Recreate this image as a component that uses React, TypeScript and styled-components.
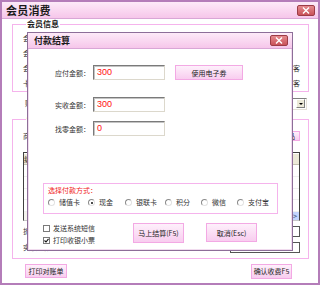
import React, { FC } from "react";
import styled, { createGlobalStyle } from "styled-components";

const GlobalStyle = createGlobalStyle`
  html, body { margin: 0; padding: 0; background: #ffffff; }
  body { font-family: "Noto Sans CJK SC", "Liberation Sans", sans-serif; color: #222; }
`;

const Window = styled.div`
  position: relative;
  box-sizing: border-box;
  width: 320px;
  height: 285px;
  border: 2px solid #b47db9;
  background: #ffffff;
  display: flex;
  flex-direction: column;
`;

const TitleBar = styled.div<{ small?: boolean }>`
  box-sizing: border-box;
  height: ${p => (p.small ? "16px" : "17px")};
  flex: none;
  display: flex;
  align-items: center;
  justify-content: space-between;
  padding: ${p => (p.small ? "0 4px 0 6px" : "0 3px 0 4px")};
  background: linear-gradient(#fdeaf8, #f6c6ea);
  border-bottom: 1px solid #d9a6d6;
`;

const Title = styled.span<{ small?: boolean }>`
  font-size: ${p => (p.small ? "9px" : "11px")};
  font-weight: bold;
  color: #1a1a1a;
  letter-spacing: ${p => (p.small ? "0" : "0.2px")};
`;

const CloseButton = styled.div`
  box-sizing: border-box;
  width: 18px;
  height: 11px;
  border: 1px solid #9c3c46;
  border-radius: 2px;
  background: linear-gradient(#e58a8e, #c9525a);
  display: flex;
  align-items: center;
  justify-content: center;
`;

const Body = styled.div`
  flex: 1;
  display: flex;
  flex-direction: column;
  padding: 0 9px 0 10px;
`;

const Group = styled.fieldset<{ h: number }>`
  box-sizing: border-box;
  margin: 0;
  height: ${p => p.h}px;
  border: 1px solid #f5b3ec;
  padding: 0 8px 0 10px;
  min-width: 0;
`;

const Legend = styled.legend`
  font-size: 8px;
  font-weight: bold;
  line-height: 10px;
  padding: 0 1px;
  margin-left: 3px;
  color: #1a1a1a;
`;

const InfoRows = styled.div`
  display: grid;
  grid-template-columns: 1fr auto;
  row-gap: 6px;
  margin-top: 5px;
`;

const Label = styled.span`
  font-size: 7px;
  line-height: 9px;
  color: #333;
  white-space: nowrap;
`;

const SelectRow = styled.div`
  display: flex;
  align-items: center;
  justify-content: space-between;
  height: 13px;
  margin: 5px 2px 4px 13px;
`;

const SelectBox = styled.div`
  box-sizing: border-box;
  width: 78px;
  height: 12px;
  border: 1px solid;
  border-color: #808080 #e4e0d6 #e4e0d6 #808080;
  display: flex;
  justify-content: flex-end;
  align-items: center;
  padding-right: 1px;
`;

const DropArrow = styled.div`
  box-sizing: border-box;
  width: 9px;
  height: 9px;
  background: #ece9d8;
  border: 1px solid;
  border-color: #ffffff #808080 #808080 #ffffff;
  display: flex;
  align-items: center;
  justify-content: center;
  &::after {
    content: "";
    border-left: 2px solid transparent;
    border-right: 2px solid transparent;
    border-top: 2px solid #000;
  }
`;

const SpreadRow = styled.div`
  display: flex;
  align-items: center;
  justify-content: space-between;
  margin-top: 7px;
`;

const PinkButton = styled.div<{ w: number; h: number }>`
  box-sizing: border-box;
  width: ${p => p.w}px;
  height: ${p => p.h}px;
  border: 1px solid #f3a9e4;
  background: linear-gradient(#fef0fb, #f8cdef);
  font-size: 7px;
  color: #222;
  display: flex;
  align-items: center;
  justify-content: center;
  white-space: nowrap;
`;

const Table = styled.div`
  box-sizing: border-box;
  margin-top: 11px;
  height: 69px;
  border: 1px solid;
  border-color: #404040 #404040 #c8c8c8 #404040;
  display: flex;
  flex-direction: column;
`;

const TableHead = styled.div`
  height: 10px;
  margin-top: 1px;
  background: #ece9d8;
  border-bottom: 1px solid #c5c2b2;
  display: grid;
  grid-template-columns: repeat(6, 1fr);
  font-size: 7px;
  line-height: 10px;
`;

const TableRow = styled.div`
  height: 11px;
  border-bottom: 1px solid #f0f0f0;
`;

const ScrollBar = styled.div`
  margin-top: auto;
  height: 8px;
  background: #f4f3ee;
  display: flex;
  justify-content: flex-end;
`;

const ScrollArrow = styled.div`
  width: 8px;
  height: 8px;
  background: #c3d3fd;
  color: #4d6185;
  font-size: 7px;
  line-height: 8px;
  text-align: center;
  font-weight: bold;
`;

const InputRow = styled.div`
  display: flex;
  align-items: center;
  justify-content: space-between;
  margin-top: 5px;
`;

const SmallInput = styled.div`
  box-sizing: border-box;
  width: 70px;
  height: 11px;
  border: 1px solid #555;
`;

const Footer = styled.div`
  flex: 1;
  display: flex;
  align-items: center;
  justify-content: space-between;
  padding: 0 17px 0 13px;
`;

/* payment dialog */

const Dialog = styled.div`
  position: absolute;
  left: 25px;
  top: 30px;
  box-sizing: border-box;
  width: 266px;
  height: 219px;
  background: #ffffff;
  border: 1px solid #8d6e99;
  box-shadow: inset 0 0 0 1px #f1dcef;
  display: flex;
  flex-direction: column;
`;

const DialogBody = styled.div`
  display: flex;
  flex-direction: column;
  padding: 0 0 0 15px;
`;

const FieldRow = styled.div<{ top: number }>`
  display: flex;
  align-items: center;
  margin-top: ${p => p.top}px;
`;

const FieldLabel = styled.span`
  width: 47px;
  margin-right: 3px;
  text-align: right;
  font-size: 7px;
  color: #333;
  white-space: nowrap;
`;

const MoneyInput = styled.div`
  box-sizing: border-box;
  width: 72px;
  height: 15px;
  border: 1px solid;
  border-color: #7a7a7a #dcd8cc #dcd8cc #7a7a7a;
  box-shadow: inset 1px 1px 0 #c4c4c4;
  padding-left: 3px;
  font-family: "Liberation Sans", Arial, sans-serif;
  font-size: 9px;
  line-height: 13px;
  color: #ff1010;
  margin-right: 10px;
`;

const PayBox = styled.div`
  box-sizing: border-box;
  width: 235px;
  height: 31px;
  margin-top: 47px;
  border: 1px solid #f5b3ec;
  padding: 2px 3px 0 4px;
`;

const PayTitle = styled.div`
  font-size: 7px;
  line-height: 9px;
  color: #f01c1c;
`;

const RadioRow = styled.div`
  display: grid;
  grid-template-columns: 40px 37px 40px 36px 36px auto;
  margin-top: 3px;
`;

const RadioItem = styled.label`
  display: flex;
  align-items: center;
  gap: 4px;
  font-size: 7px;
  line-height: 9px;
  color: #333;
  white-space: nowrap;
`;

const RadioDot = styled.span<{ checked?: boolean }>`
  box-sizing: border-box;
  width: 7px;
  height: 7px;
  border-radius: 50%;
  border: 1px solid;
  border-color: #8a8a8a #e2e2e2 #e2e2e2 #8a8a8a;
  display: flex;
  align-items: center;
  justify-content: center;
  &::after {
    content: "";
    width: 2px;
    height: 2px;
    border-radius: 50%;
    background: ${p => (p.checked ? "#111" : "transparent")};
  }
`;

const BottomArea = styled.div`
  display: flex;
  align-items: flex-start;
  margin-top: 9px;
`;

const CheckColumn = styled.div`
  display: flex;
  flex-direction: column;
  gap: 4px;
  width: 90px;
  margin-top: 1px;
`;

const CheckItem = styled.label`
  display: flex;
  align-items: center;
  gap: 3px;
  font-size: 7px;
  line-height: 8px;
  color: #333;
  white-space: nowrap;
`;

const CheckBox = styled.span`
  box-sizing: border-box;
  width: 7px;
  height: 7px;
  border: 1px solid #7a7a7a;
  background: #fff;
  display: flex;
  align-items: center;
  justify-content: center;
`;

const DialogButtons = styled.div`
  display: flex;
  gap: 22px;
`;

const CloseX: FC = () => (
  <svg width="8" height="7" viewBox="0 0 8 7">
    <path d="M1 0.5 L7 6.5 M7 0.5 L1 6.5" stroke="#fff" strokeWidth="1.4" />
  </svg>
);

const Check: FC<{ on?: boolean }> = ({ on }) => (
  <CheckBox>
    {on && (
      <svg width="5" height="5" viewBox="0 0 5 5">
        <path d="M0.5 2.5 L2 4 L4.5 0.8" stroke="#111" strokeWidth="1.1" fill="none" />
      </svg>
    )}
  </CheckBox>
);

const payMethods = ["储值卡", "现金", "银联卡", "积分", "微信", "支付宝"];

export default function App() {
  return (
    <>
      <GlobalStyle />
      <Window>
        <TitleBar>
          <Title>会员消费</Title>
          <CloseButton><CloseX /></CloseButton>
        </TitleBar>
        <Body>
          <Group h={73}>
            <Legend>会员信息</Legend>
            <InfoRows>
              <Label>会员卡号</Label><Label></Label>
              <Label>会员姓名</Label><Label></Label>
              <Label>会员等级</Label><Label>◎ 生客</Label>
              <Label>卡内余额</Label><Label>◎ 熟客</Label>
            </InfoRows>
          </Group>
          <SelectRow>
            <Label>账户类型</Label>
            <SelectBox><DropArrow /></SelectBox>
          </SelectRow>
          <Group h={145}>
            <Legend>快速收银</Legend>
            <SpreadRow>
              <Label>商品编号</Label>
              <PinkButton w={38} h={10}>查询商品</PinkButton>
            </SpreadRow>
            <Table>
              <TableHead>
                <span>编号</span><span>名称</span><span>单价</span><span>数量</span><span>金额</span><span>备注</span>
              </TableHead>
              <TableRow />
              <TableRow />
              <TableRow />
              <TableRow />
              <ScrollBar><ScrollArrow>&gt;</ScrollArrow></ScrollBar>
            </Table>
            <InputRow>
              <Label>折扣金额</Label>
              <SmallInput />
            </InputRow>
            <InputRow>
              <Label>实收金额</Label>
              <SmallInput />
            </InputRow>
          </Group>
          <Footer>
            <PinkButton w={42} h={14}>打印对账单</PinkButton>
            <PinkButton w={41} h={15}>确认收费F5</PinkButton>
          </Footer>
        </Body>

        <Dialog>
          <TitleBar small>
            <Title small>付款结算</Title>
            <CloseButton><CloseX /></CloseButton>
          </TitleBar>
          <DialogBody>
            <FieldRow top={16}>
              <FieldLabel>应付金额：</FieldLabel>
              <MoneyInput>300</MoneyInput>
              <PinkButton w={68} h={15}>使用电子券</PinkButton>
            </FieldRow>
            <FieldRow top={17}>
              <FieldLabel>实收金额：</FieldLabel>
              <MoneyInput>300</MoneyInput>
            </FieldRow>
            <FieldRow top={9}>
              <FieldLabel>找零金额：</FieldLabel>
              <MoneyInput>0</MoneyInput>
            </FieldRow>
            <PayBox>
              <PayTitle>选择付款方式：</PayTitle>
              <RadioRow>
                {payMethods.map(m => (
                  <RadioItem key={m}>
                    <RadioDot checked={m === "现金"} />
                    {m}
                  </RadioItem>
                ))}
              </RadioRow>
            </PayBox>
            <BottomArea>
              <CheckColumn>
                <CheckItem><Check />发送系统短信</CheckItem>
                <CheckItem><Check on />打印收银小票</CheckItem>
              </CheckColumn>
              <DialogButtons>
                <PinkButton w={51} h={20}>马上结算(F5)</PinkButton>
                <PinkButton w={51} h={19}>取消(Esc)</PinkButton>
              </DialogButtons>
            </BottomArea>
          </DialogBody>
        </Dialog>
      </Window>
    </>
  );
}
